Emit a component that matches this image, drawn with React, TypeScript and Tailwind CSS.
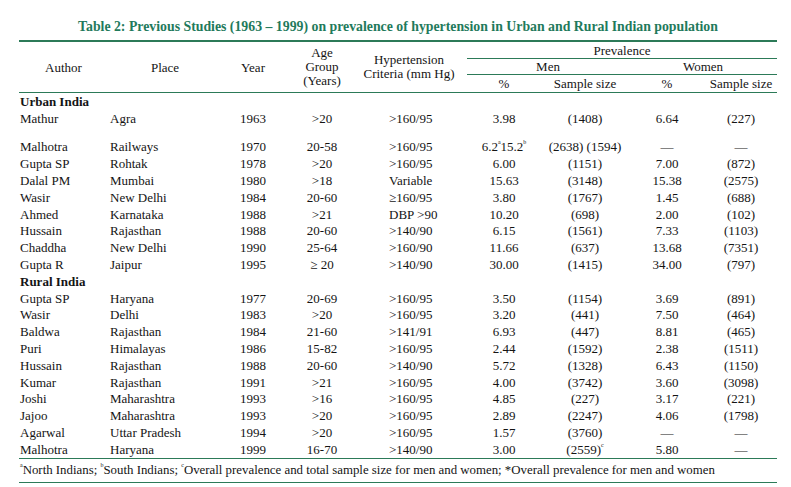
import React from "react";

const COLS = "grid grid-cols-[89px_114px_62px_76px_107px_74px_88px_76px_72px]";

type Row = [string, string, string, string, string, React.ReactNode, React.ReactNode, string, string];

const urban: Row[] = [
  ["Mathur", "Agra", "1963", ">20", ">160/95", "3.98", "(1408)", "6.64", "(227)"],
  [
    "Malhotra",
    "Railways",
    "1970",
    "20-58",
    ">160/95",
    <span key="m">
      6.2<sup className="text-[6px] align-[4px]">a</sup>15.2<sup className="text-[6px] align-[4px]">b</sup>
    </span>,
    "(2638) (1594)",
    "—",
    "—",
  ],
  ["Gupta SP", "Rohtak", "1978", ">20", ">160/95", "6.00", "(1151)", "7.00", "(872)"],
  ["Dalal PM", "Mumbai", "1980", ">18", "Variable", "15.63", "(3148)", "15.38", "(2575)"],
  ["Wasir", "New Delhi", "1984", "20-60", "≥160/95", "3.80", "(1767)", "1.45", "(688)"],
  ["Ahmed", "Karnataka", "1988", ">21", "DBP >90", "10.20", "(698)", "2.00", "(102)"],
  ["Hussain", "Rajasthan", "1988", "20-60", ">140/90", "6.15", "(1561)", "7.33", "(1103)"],
  ["Chaddha", "New Delhi", "1990", "25-64", ">160/90", "11.66", "(637)", "13.68", "(7351)"],
  ["Gupta R", "Jaipur", "1995", "≥ 20", ">140/90", "30.00", "(1415)", "34.00", "(797)"],
];

const rural: Row[] = [
  ["Gupta SP", "Haryana", "1977", "20-69", ">160/95", "3.50", "(1154)", "3.69", "(891)"],
  ["Wasir", "Delhi", "1983", ">20", ">160/95", "3.20", "(441)", "7.50", "(464)"],
  ["Baldwa", "Rajasthan", "1984", "21-60", ">141/91", "6.93", "(447)", "8.81", "(465)"],
  ["Puri", "Himalayas", "1986", "15-82", ">160/95", "2.44", "(1592)", "2.38", "(1511)"],
  ["Hussain", "Rajasthan", "1988", "20-60", ">140/90", "5.72", "(1328)", "6.43", "(1150)"],
  ["Kumar", "Rajasthan", "1991", ">21", ">160/95", "4.00", "(3742)", "3.60", "(3098)"],
  ["Joshi", "Maharashtra", "1993", ">16", ">160/95", "4.85", "(227)", "3.17", "(221)"],
  ["Jajoo", "Maharashtra", "1993", ">20", ">160/95", "2.89", "(2247)", "4.06", "(1798)"],
  ["Agarwal", "Uttar Pradesh", "1994", ">20", ">160/95", "1.57", "(3760)", "—", "—"],
  [
    "Malhotra",
    "Haryana",
    "1999",
    "16-70",
    ">140/90",
    "3.00",
    <span key="s">
      (2559)<sup className="text-[6px] align-[4px]">c</sup>
    </span>,
    "5.80",
    "—",
  ],
];

function DataRow({ r, extra }: { r: Row; extra?: string }) {
  return (
    <div className={`${COLS} items-center h-[16.8px] ${extra ?? ""}`}>
      <div className="pl-[1px]">{r[0]}</div>
      <div className="pl-[2px]">{r[1]}</div>
      <div className="text-center">{r[2]}</div>
      <div className="text-center">{r[3]}</div>
      <div className="pl-[29px]">{r[4]}</div>
      <div className="text-center">{r[5]}</div>
      <div className="text-center">{r[6]}</div>
      <div className="text-center">{r[7]}</div>
      <div className="text-center">{r[8]}</div>
    </div>
  );
}

export default function App() {
  return (
    <div className="w-[791px] h-[487px] bg-white text-[#141414] text-[13px] leading-[15px] font-['Liberation_Serif',serif]">
      <div className="ml-[19px] w-[758px]">
        <div className="pt-[20px] h-[34px] text-center font-bold text-[#1f7a5c] text-[13.8px] leading-[14px] whitespace-nowrap">
          Table 2: Previous Studies (1963 – 1999) on prevalence of hypertension in Urban and Rural Indian population
        </div>
        <div className="mt-[6px] h-[2px] bg-[#2c7a58]" />
        {/* header */}
        <div className={`${COLS} grid-rows-[17px_16px_17px] border-b border-[#2c7a58]`}>
          <div className="row-span-3 col-start-1 row-start-1 flex items-center justify-center">Author</div>
          <div className="row-span-3 col-start-2 row-start-1 flex items-center justify-center">Place</div>
          <div className="row-span-3 col-start-3 row-start-1 flex items-center justify-center">Year</div>
          <div className="row-span-3 col-start-4 row-start-1 flex items-center justify-center text-center leading-[14px]">
            Age
            <br />
            Group
            <br />
            (Years)
          </div>
          <div className="row-span-3 col-start-5 row-start-1 flex items-center justify-center text-center leading-[14px] pr-[9px]">
            Hypertension
            <br />
            Criteria (mm Hg)
          </div>
          <div className="col-start-6 col-span-4 row-start-1 flex items-center justify-center border-b border-[#2c7a58]">
            Prevalence
          </div>
          <div className="col-start-6 col-span-2 row-start-2 flex items-center justify-center border-b border-[#2c7a58]">
            Men
          </div>
          <div className="col-start-8 col-span-2 row-start-2 flex items-center justify-center border-b border-[#2c7a58]">
            Women
          </div>
          <div className="col-start-6 row-start-3 flex items-center justify-center">%</div>
          <div className="col-start-7 row-start-3 flex items-center justify-center">Sample size</div>
          <div className="col-start-8 row-start-3 flex items-center justify-center">%</div>
          <div className="col-start-9 row-start-3 flex items-center justify-center">Sample size</div>
        </div>
        {/* body */}
        <div className="pt-[0.6px]">
          <div className="h-[16.8px] flex items-center pl-[1px] font-bold">Urban India</div>
          <DataRow r={urban[0]} extra="mb-[11.4px]" />
          {urban.slice(1).map((r, i) => (
            <DataRow key={"u" + i} r={r} />
          ))}
          <div className="h-[16.8px] flex items-center pl-[1px] font-bold">Rural India</div>
          {rural.map((r, i) => (
            <DataRow key={"r" + i} r={r} />
          ))}
        </div>
        <div className="border-t border-[#2c7a58] border-b h-[25px] flex items-center pl-[1px] text-[12.85px] whitespace-nowrap">
          <span>
            <sup className="text-[6px] align-[4px]">a</sup>North Indians; <sup className="text-[6px] align-[4px]">b</sup>
            South Indians; <sup className="text-[6px] align-[4px]">c</sup>Overall prevalence and total sample size for men and
            women; *Overall prevalence for men and women
          </span>
        </div>
      </div>
    </div>
  );
}
